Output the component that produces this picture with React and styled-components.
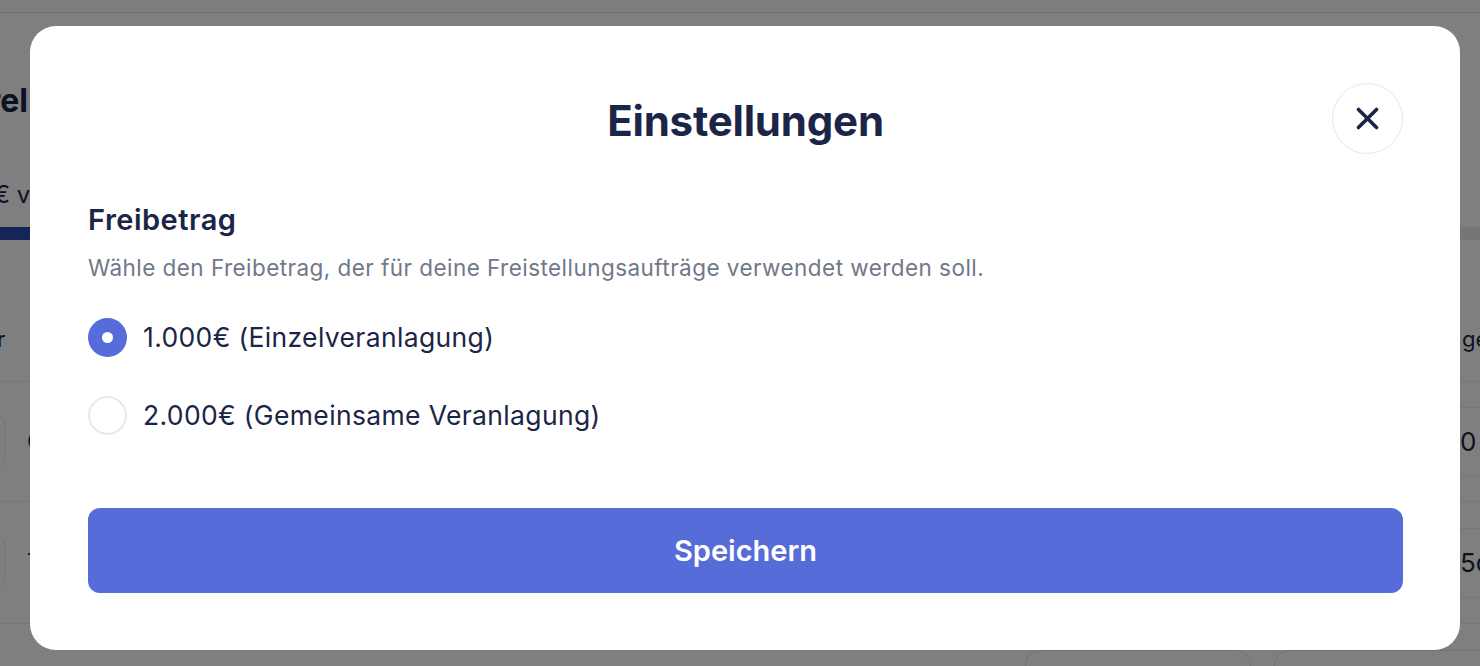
import React, { useState } from "react";
import styled, { createGlobalStyle } from "styled-components";

const Global = createGlobalStyle`
  html, body { margin: 0; padding: 0; }
  body {
    width: 1480px; height: 666px; overflow: hidden;
    font-family: Inter, "Noto Sans", sans-serif;
    background: #ffffff;
  }
`;

const navy = "#1b2547";

/* ---------- page behind the dialog ---------- */
const Page = styled.div`
  position: relative;
  width: 1480px;
  height: 666px;
  overflow: hidden;
  background: #ffffff;
  color: ${navy};
`;

const TopBar = styled.div`
  height: 12px;
  background: #fafafa;
  border-bottom: 1px solid #e2e2e2;
`;

const Heading = styled.div`
  margin: 68px 0 0 -12px;
  font-size: 32px;
  font-weight: 700;
  line-height: 40px;
`;

const SubLine = styled.div`
  margin: 59px 0 0 -6px;
  font-size: 24px;
  line-height: 30px;
`;

const TabBar = styled.div`
  margin-top: 17px;
  height: 13px;
  display: flex;
  justify-content: space-between;
`;

const TabActive = styled.div`
  width: 200px;
  background: #2b4bb0;
`;

const TabRest = styled.div`
  width: 200px;
  background: #ececec;
`;

const TableHead = styled.div`
  margin-top: 78px;
  height: 64px;
  box-sizing: border-box;
  padding-top: 6px;
  display: flex;
  justify-content: space-between;
  align-items: flex-start;
  font-size: 22px;
  line-height: 30px;
  border-bottom: 1px solid #ececec;
`;

const Row = styled.div`
  height: ${(p) => p.$h}px;
  display: flex;
  justify-content: space-between;
  align-items: center;
  font-size: 24px;
  border-bottom: 1px solid #ececec;
`;

const LeftCell = styled.div`
  display: flex;
  align-items: center;
  gap: 22px;
  margin-left: ${(p) => p.$offset || 0}px;
`;

const RightCell = styled.div`
  width: 80px;
  margin-right: -62px;
  white-space: nowrap;
`;

const Thumb = styled.div`
  width: 40px;
  height: 52px;
  margin-left: -37px;
  border: 1px solid #e8e8e8;
  border-radius: 8px;
`;

const RightBox = styled.div`
  width: 100px;
  margin-right: -80px;
  height: 68px;
  border-top: 1px solid #ececec;
  border-bottom: 1px solid #ececec;
  display: flex;
  align-items: center;
  padding-left: 3px;
  font-size: 26px;
`;

const Footer = styled.div`
  margin-top: 26px;
  display: flex;
  gap: 23px;
  padding-left: 1025px;
`;

const GhostButton = styled.div`
  width: ${(p) => p.$w}px;
  height: 50px;
  border: 1px solid #e4e4e4;
  border-radius: 14px;
  flex-shrink: 0;
`;

/* ---------- dialog ---------- */
const Overlay = styled.div`
  position: absolute;
  inset: 0;
  background: rgba(0, 0, 0, 0.5);
  display: flex;
  justify-content: center;
  align-items: flex-start;
  padding: 26px 0 0 10px;
`;

const Dialog = styled.div`
  width: 1430px;
  box-sizing: border-box;
  background: #ffffff;
  border-radius: 26px;
  padding: 58px 57px 57px 58px;
  display: flex;
  flex-direction: column;
`;

const Header = styled.div`
  position: relative;
  display: flex;
  justify-content: center;
  align-items: center;
  height: 72px;
`;

const Title = styled.h2`
  margin: 0;
  font-size: 42px;
  font-weight: 700;
  letter-spacing: -0.2px;
  color: ${navy};
`;

const CloseButton = styled.button`
  position: absolute;
  right: 0;
  top: -1px;
  width: 71px;
  height: 71px;
  border-radius: 50%;
  border: 1px solid #e6e7ec;
  background: #ffffff;
  display: flex;
  align-items: center;
  justify-content: center;
  padding: 0;
  cursor: pointer;
`;

const SectionTitle = styled.h3`
  margin: 46px 0 0;
  font-size: 29px;
  font-weight: 600;
  letter-spacing: 0.5px;
  line-height: 36px;
  color: ${navy};
`;

const Description = styled.p`
  margin: 15px 0 0;
  font-size: 22.5px;
  letter-spacing: 0.45px;
  line-height: 30px;
  color: #717889;
`;

const Options = styled.div`
  margin-top: 34px;
  display: flex;
  flex-direction: column;
  gap: 38px;
`;

const Option = styled.label`
  display: flex;
  align-items: center;
  gap: 16px;
  cursor: pointer;
  font-size: 26.5px;
  letter-spacing: 0.35px;
  line-height: 40px;
  color: ${navy};
`;

const Radio = styled.span`
  width: 39px;
  height: 39px;
  box-sizing: border-box;
  border-radius: 50%;
  flex-shrink: 0;
  display: flex;
  align-items: center;
  justify-content: center;
  background: ${(p) => (p.$checked ? "#566cd9" : "#ffffff")};
  border: ${(p) => (p.$checked ? "none" : "2px solid #e8e9ee")};
  &::after {
    content: "";
    width: 11px;
    height: 11px;
    border-radius: 50%;
    background: #ffffff;
    display: ${(p) => (p.$checked ? "block" : "none")};
  }
`;

const SaveButton = styled.button`
  margin-top: 73px;
  height: 85px;
  border: none;
  border-radius: 12px;
  background: #566cd9;
  color: #ffffff;
  font-family: inherit;
  font-size: 29px;
  font-weight: 600;
  cursor: pointer;
`;

const CloseIcon = () => (
  <svg width="31" height="31" viewBox="0 0 24 24" fill="none" stroke={navy} strokeWidth="2.8" strokeLinecap="round">
    <path d="M5 5L19 19M19 5L5 19" />
  </svg>
);

export default function App() {
  const [value, setValue] = useState("single");
  return (
    <>
      <Global />
      <Page>
        <TopBar />
        <Heading>rel</Heading>
        <SubLine>€ v</SubLine>
        <TabBar>
          <TabActive />
          <TabRest />
        </TabBar>
        <TableHead>
          <LeftCell $offset={-3}>r</LeftCell>
          <RightCell>ges</RightCell>
        </TableHead>
        <Row $h={119}>
          <LeftCell>
            <Thumb />C
          </LeftCell>
          <RightBox>0</RightBox>
        </Row>
        <Row $h={121}>
          <LeftCell>
            <Thumb />T
          </LeftCell>
          <RightBox>5c</RightBox>
        </Row>
        <Footer>
          <GhostButton $w={224} />
          <GhostButton $w={240} />
        </Footer>
        <Overlay>
          <Dialog>
            <Header>
              <Title>Einstellungen</Title>
              <CloseButton aria-label="Schließen">
                <CloseIcon />
              </CloseButton>
            </Header>
            <SectionTitle>Freibetrag</SectionTitle>
            <Description>
              Wähle den Freibetrag, der für deine Freistellungsaufträge verwendet werden soll.
            </Description>
            <Options>
              <Option onClick={() => setValue("single")}>
                <Radio $checked={value === "single"} />
                1.000€ (Einzelveranlagung)
              </Option>
              <Option onClick={() => setValue("joint")}>
                <Radio $checked={value === "joint"} />
                2.000€ (Gemeinsame Veranlagung)
              </Option>
            </Options>
            <SaveButton>Speichern</SaveButton>
          </Dialog>
        </Overlay>
      </Page>
    </>
  );
}
